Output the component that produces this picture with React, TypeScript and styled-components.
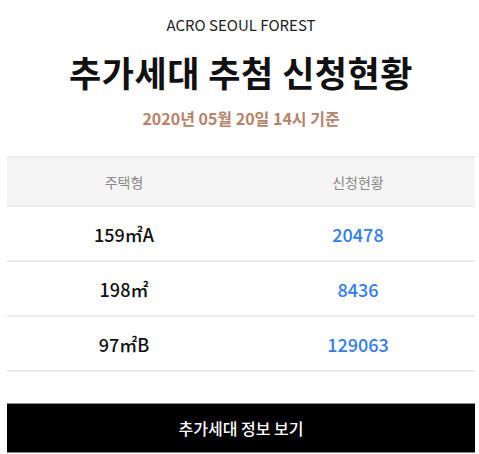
import React from "react";
import styled, { createGlobalStyle } from "styled-components";

const Global = createGlobalStyle`
  html, body { margin: 0; padding: 0; background: #fff; }
  body { font-family: "Noto Sans CJK KR", "Noto Sans", sans-serif; color: #111; }
`;

const Page = styled.div`
  width: 468px;
  padding: 0 4px 0 7px;
  display: flex;
  flex-direction: column;
  align-items: stretch;
`;

const Header = styled.header`
  display: flex;
  flex-direction: column;
  align-items: center;
  padding-top: 13px;
`;

const Brand = styled.div`
  font-size: 15px;
  line-height: 24px;
  color: #222;
`;

const Title = styled.h1`
  margin: 13px 0 0;
  font-size: 35px;
  line-height: 44px;
  font-weight: 700;
  color: #111;
  letter-spacing: 0.5px;
`;

const Stamp = styled.div`
  margin-top: 12px;
  font-size: 16px;
  line-height: 24px;
  font-weight: 700;
  color: #b7826a;
`;

const Table = styled.div`
  margin-top: 26px;
  border-top: 2px solid #ececec;
`;

const Row = styled.div<{ $head?: boolean }>`
  display: grid;
  grid-template-columns: 1fr 1fr;
  height: ${(p) => (p.$head ? 47 : 53)}px;
  align-items: center;
  background: ${(p) => (p.$head ? "#f5f5f5" : "#fff")};
  border-bottom: 2px solid #ececec;
`;

const Cell = styled.div<{ $kind: "head" | "type" | "count" }>`
  text-align: center;
  font-size: ${(p) => (p.$kind === "head" ? "14px" : "18px")};
  font-weight: ${(p) => (p.$kind === "head" ? 400 : 500)};
  color: ${(p) =>
    p.$kind === "head" ? "#8a8a8a" : p.$kind === "count" ? "#2f7cf6" : "#111"};
`;

const Button = styled.button`
  margin-top: 31px;
  height: 50px;
  width: 100%;
  background: #000;
  color: #fff;
  border: none;
  border-top: 1px solid #888;
  border-bottom: 1px solid #888;
  font-family: inherit;
  font-size: 16px;
  font-weight: 500;
  cursor: pointer;
`;

const rows = [
  { type: "159㎡A", count: "20478" },
  { type: "198㎡", count: "8436" },
  { type: "97㎡B", count: "129063" },
];

export default function App() {
  return (
    <>
      <Global />
      <Page>
        <Header>
          <Brand>ACRO SEOUL FOREST</Brand>
          <Title>추가세대 추첨 신청현황</Title>
          <Stamp>2020년 05월 20일 14시 기준</Stamp>
        </Header>
        <Table>
          <Row $head>
            <Cell $kind="head">주택형</Cell>
            <Cell $kind="head">신청현황</Cell>
          </Row>
          {rows.map((r) => (
            <Row key={r.type}>
              <Cell $kind="type">{r.type}</Cell>
              <Cell $kind="count">{r.count}</Cell>
            </Row>
          ))}
        </Table>
        <Button>추가세대 정보 보기</Button>
      </Page>
    </>
  );
}
